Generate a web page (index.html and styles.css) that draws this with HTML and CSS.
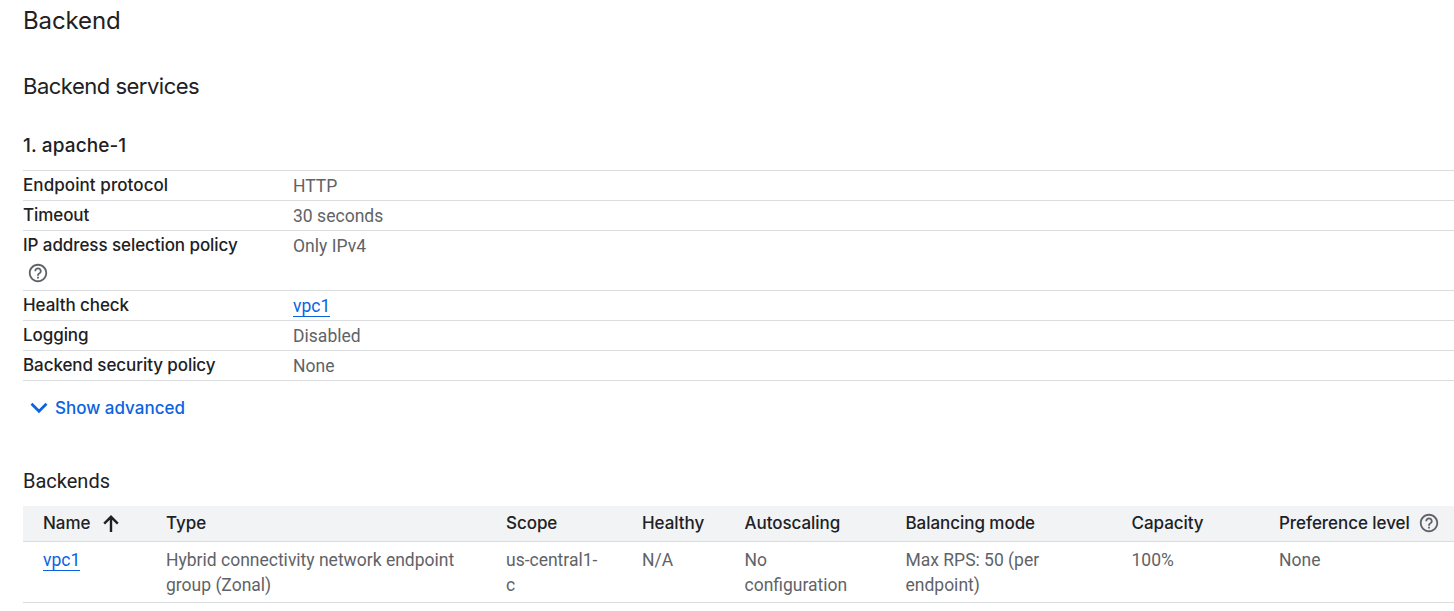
FILE: index.html
```html
<!DOCTYPE html>
<html lang="en">
<head>
<meta charset="utf-8">
<title>Backend</title>
<link rel="stylesheet" href="styles.css">
</head>
<body>
<svg class="sprite" aria-hidden="true">
  <symbol id="help" viewBox="0 0 24 24"><path d="M11 18h2v-2h-2v2zm1-16C6.480 2 2 6.480 2 12s4.480 10 10 10 10-4.480 10-10S17.520 2 12 2zm0 18c-4.410 0-8-3.590-8-8s3.590-8 8-8 8 3.590 8 8-3.590 8-8 8zm0-14c-2.210 0-4 1.790-4 4h2c0-1.100.9-2 2-2s2 .9 2 2c0 2-3 1.750-3 5h2c0-2.250 3-2.500 3-5 0-2.210-1.790-4-4-4z"/></symbol>
</svg>
<main class="page">
  <h1 class="title">Backend</h1>
  <h2 class="subtitle">Backend services</h2>
  <h3 class="service">1. apache-1</h3>
  <dl class="details">
    <div class="detail"><dt class="protocol">Endpoint protocol</dt><dd>HTTP</dd></div>
    <div class="detail"><dt>Timeout</dt><dd>30 seconds</dd></div>
    <div class="detail tall"><dt><span class="policy">IP address selection policy</span><svg class="help"><use href="#help"/></svg></dt><dd>Only IPv4</dd></div>
    <div class="detail"><dt>Health check</dt><dd><a class="link">vpc1</a></dd></div>
    <div class="detail"><dt>Logging</dt><dd>Disabled</dd></div>
    <div class="detail"><dt>Backend security policy</dt><dd>None</dd></div>
  </dl>
  <div class="advanced">
    <svg class="chevron" viewBox="0 0 18 12"><path d="M1.500 1.800 9 9.300l7.500-7.500"/></svg>
    <span>Show advanced</span>
  </div>
  <h4 class="caption">Backends</h4>
  <div class="grid head">
    <div class="name">Name<svg class="arrow" viewBox="0 0 16 18"><path d="M8 17V2M1.200 8.600 8 1.800l6.800 6.800"/></svg></div>
    <div>Type</div><div>Scope</div><div>Healthy</div><div>Autoscaling</div><div>Balancing mode</div><div>Capacity</div>
    <div class="pref">Preference level<svg class="help"><use href="#help"/></svg></div>
  </div>
  <div class="grid row">
    <div><a class="link">vpc1</a></div>
    <div>Hybrid connectivity network endpoint<br>group (Zonal)</div>
    <div>us-central1-<br>c</div>
    <div>N/A</div>
    <div>No<br>configuration</div>
    <div>Max RPS: 50 (per<br>endpoint)</div>
    <div>100%</div>
    <div>None</div>
  </div>
</main>
</body>
</html>
```
FILE: styles.css
```css
* { box-sizing: border-box; }
body { margin: 0; background: #fff; color: #202124; font-family: Roboto, "Liberation Sans", sans-serif; overflow: hidden; }
.sprite { display: block; width: 0; height: 0; }
.page { padding-left: 23px; white-space: nowrap; }
h1, h2, h3, h4, dl, dd { margin: 0; }
h1, h2, h3, dt, .advanced, .head { font-family: Inter, "Liberation Sans", sans-serif; }
.title { height: 66px; padding-top: 6px; font-size: 24px; line-height: 30px; font-weight: 400; letter-spacing: -0.1px; }
.subtitle { height: 67px; padding-top: 5px; font-size: 22px; line-height: 30px; font-weight: 400; letter-spacing: -0.5px; }
.service { height: 37px; font-size: 19px; line-height: 26px; font-weight: 500; letter-spacing: 0.1px; }
.details { border-bottom: 1px solid #dadce0; }
.detail { display: grid; grid-template-columns: 270px 1fr; height: 30px; border-top: 1px solid #dadce0; }
.detail.tall { height: 60px; }
dt { font-size: 17px; line-height: 29px; font-weight: 500; letter-spacing: -0.08px; }
dt.protocol { letter-spacing: 0.08px; }
dd { font-size: 17.5px; line-height: 30px; color: #5f6368; letter-spacing: 0.03px; }
.policy { display: block; }
.help { display: block; width: 22px; height: 22px; fill: #5f6368; }
dt .help { margin: 2px 0 0 4px; }
.link { display: inline-block; line-height: 19px; color: #0b63e0; border-bottom: 1px solid #0b63e0; }
.advanced { display: flex; align-items: center; gap: 7px; height: 54px; padding-left: 7px; font-size: 17px; font-weight: 500; color: #0b63e0; }
.chevron { width: 18px; height: 12px; fill: none; stroke: currentColor; stroke-width: 2.7; }
.caption { height: 71px; padding-top: 34px; font-size: 20px; line-height: 24px; font-weight: 400; }
.grid { display: grid; grid-template-columns: 123px 340px 136px 102.5px 161px 226px 147.5px 1fr; padding-left: 20px; border-bottom: 1px solid #dadce0; }
.head { height: 36px; background: #f1f3f4; font-size: 17px; line-height: 35px; font-weight: 500; letter-spacing: -0.05px; }
.name, .pref { display: flex; align-items: center; }
.name { gap: 13px; }
.pref { gap: 8px; }
.pref .help { margin-top: -2px; }
.arrow { width: 16px; height: 18px; fill: none; stroke: currentColor; stroke-width: 2.4; }
.row { height: 61px; padding-top: 6px; font-size: 17.5px; line-height: 25px; color: #5f6368; }
```
